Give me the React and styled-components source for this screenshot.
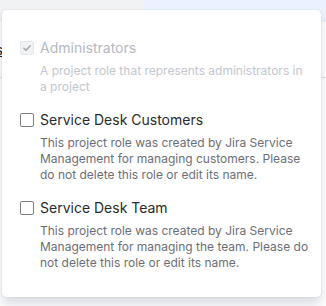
import React from "react";
import styled, { createGlobalStyle } from "styled-components";

const Global = createGlobalStyle`
  html, body { margin: 0; padding: 0; background: #ffffff; }
  body { font-family: Inter, "Noto Sans", "Liberation Sans", sans-serif; }
  * { box-sizing: border-box; }
`;

const Page = styled.div`
  position: relative;
  width: 326px;
  height: 306px;
  overflow: hidden;
  background: #ffffff;
`;

const TopBar = styled.div`
  display: flex;
  height: 22px;
`;

const TopSegment = styled.div`
  flex: ${(p) => (p.$grow ? 1 : "none")};
  width: ${(p) => (p.$grow ? "auto" : "143px")};
  background: ${(p) => p.$color};
`;

const TableRow = styled.div`
  display: flex;
  align-items: center;
  height: 56px;
  border-bottom: 1px solid #dcdfe4;
`;

const CutCell = styled.div`
  width: 3px;
  display: flex;
  justify-content: flex-end;
  white-space: nowrap;
  font-size: 14px;
`;

const CellLink = styled.a`
  color: #1d2125;
  text-decoration: underline;
`;

const Popover = styled.div`
  position: absolute;
  left: 2px;
  top: 10px;
  width: 319px;
  height: 287px;
  background: #ffffff;
  border-radius: 4px;
  box-shadow: 0 8px 12px rgba(9, 30, 66, 0.15), 0 0 1px rgba(9, 30, 66, 0.31);
  padding: 28px 8px 0 18px;
  display: flex;
  flex-direction: column;
  gap: 15px;
`;

const Item = styled.div`
  display: grid;
  grid-template-columns: 14px 1fr;
  column-gap: 6px;
`;

const Box = styled.span`
  width: 14px;
  height: 14px;
  margin-top: 3px;
  border-radius: 2px;
  border: 1px solid ${(p) => (p.$disabled ? "#e4e6ea" : "#7d818a")};
  background: ${(p) => (p.$disabled ? "#f1f2f4" : "#ffffff")};
  display: flex;
  align-items: center;
  justify-content: center;
`;

const Title = styled.div`
  font-size: 14px;
  line-height: 20px;
  color: ${(p) => (p.$disabled ? "#b4b9c2" : "#292a2e")};
`;

const Desc = styled.div`
  grid-column: 2;
  margin-top: 5px;
  font-size: 12px;
  line-height: 16px;
  color: ${(p) => (p.$disabled ? "#c2c6cd" : "#6b6e76")};
  padding-right: 4px;
`;

const Check = () => (
  <svg width="10" height="10" viewBox="0 0 10 10">
    <path d="M1.8 5.2 L4 7.3 L8.2 2.8" fill="none" stroke="#9ea2aa" strokeWidth="1.4" strokeLinecap="round" strokeLinejoin="round" />
  </svg>
);

const roles = [
  {
    name: "Administrators",
    desc: "A project role that represents administrators in a project",
    disabled: true,
  },
  {
    name: "Service Desk Customers",
    desc: "This project role was created by Jira Service Management for managing customers. Please do not delete this role or edit its name.",
  },
  {
    name: "Service Desk Team",
    desc: "This project role was created by Jira Service Management for managing the team. Please do not delete this role or edit its name.",
  },
];

export default function App() {
  return (
    <Page>
      <Global />
      <TopBar>
        <TopSegment $color="#f1f2f4" />
        <TopSegment $grow $color="#e9f2fe" />
      </TopBar>
      <TableRow>
        <CutCell>
          <CellLink>Roles</CellLink>
        </CutCell>
      </TableRow>
      <Popover>
        {roles.map((r) => (
          <Item key={r.name}>
            <Box $disabled={r.disabled}>{r.disabled && <Check />}</Box>
            <Title $disabled={r.disabled}>{r.name}</Title>
            <Desc $disabled={r.disabled}>{r.desc}</Desc>
          </Item>
        ))}
      </Popover>
    </Page>
  );
}
